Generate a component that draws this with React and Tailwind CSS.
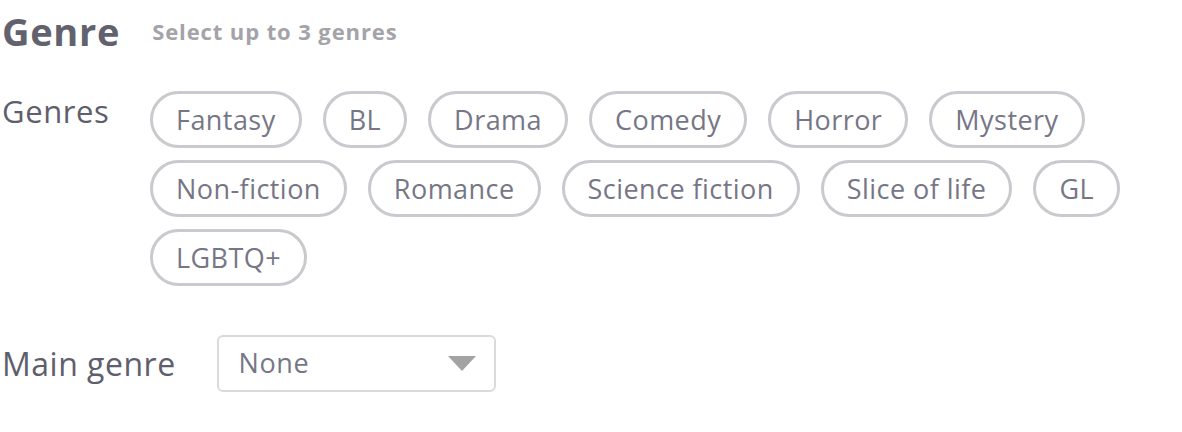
import React from "react";

const genres = [
  "Fantasy",
  "BL",
  "Drama",
  "Comedy",
  "Horror",
  "Mystery",
  "Non-fiction",
  "Romance",
  "Science fiction",
  "Slice of life",
  "GL",
  "LGBTQ+",
];

const GenreChip = ({ label }) => (
  <button className="h-[57px] px-[23px] rounded-full border-[3px] border-[#c9c9ce] bg-white text-[27px] tracking-[0.45px] text-[#767686] leading-none">
    {label}
  </button>
);

export default function App() {
  return (
    <div className="w-[1182px] h-[432px] bg-white font-['Open_Sans',sans-serif] pl-[2px] pt-[7px]">
      {/* section header */}
      <div className="flex items-center gap-[32px]">
        <h2 className="text-[38px] font-bold text-[#62626f] leading-[48px] tracking-[0.7px]">Genre</h2>
        <span className="text-[22px] font-bold text-[#a3a3a8] tracking-[0.9px]">Select up to 3 genres</span>
      </div>

      <div className="flex mt-[37px]">
        <div className="w-[148px] shrink-0 text-[31px] tracking-[0.6px] text-[#5e5e6c] leading-none pt-[4px]">Genres</div>
        <div className="flex flex-wrap gap-x-[21px] gap-y-[12px] w-[1000px] -mt-[1px]">
          {genres.map((g) => (
            <GenreChip key={g} label={g} />
          ))}
        </div>
      </div>

      <div className="flex items-center gap-[41px] mt-[49px]">
        <div className="text-[32px] tracking-[0.5px] text-[#5e5e6c] leading-none">Main genre</div>
        <div className="w-[279px] h-[57px] rounded-[6px] border-2 border-[#dadada] flex items-center justify-between pl-[20px] pr-[18px]">
          <span className="text-[27px] tracking-[0.6px] text-[#767686]">None</span>
          <svg width="28" height="15" viewBox="0 0 28 15">
            <path d="M0 0 L28 0 L14 15 Z" fill="#a3a3a3" />
          </svg>
        </div>
      </div>
    </div>
  );
}
